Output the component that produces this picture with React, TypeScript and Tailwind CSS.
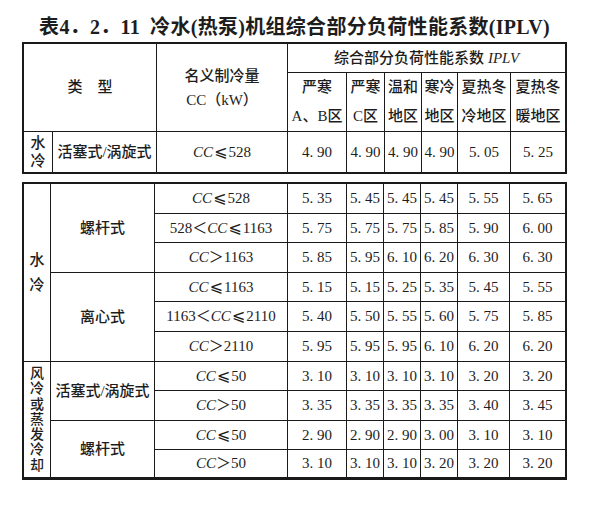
const ink = "text-[#1d1d1d]";

const cell = `bg-white flex items-center justify-center text-center ${ink}`;

function Val({ v }: { v: string }) {
  return <div className={`${cell} text-[15px]`}>{v.replace(".", ". ")}</div>;
}

function Le() {
  return <span className="font-['DejaVu_Serif','DejaVu_Sans',serif] text-[16px] leading-none font-normal mx-[1px]">⩽</span>;
}

function Cap({ c }: { c: string }) {
  // "le:528", "mid:528:1163", "gt:1163" style ranges
  const [kind, a, b] = c.split(":");
  const cc = <i>CC</i>;
  if (kind === "le") return <span>{cc}<Le />{a}</span>;
  if (kind === "gt") return <span>{cc}＞{a}</span>;
  return <span>{a}＜{cc}<Le />{b}</span>;
}

function Vertical({ text, lead }: { text: string; lead: string }) {
  return (
    <div className={`${cell} flex-col font-medium ${lead}`}>
      {text.split("").map((ch, i) => (
        <span key={i}>{ch}</span>
      ))}
    </div>
  );
}

type Row = { cc: string; vals: string[] };

const screw: Row[] = [
  { cc: "le:528", vals: ["5.35", "5.45", "5.45", "5.45", "5.55", "5.65"] },
  { cc: "mid:528:1163", vals: ["5.75", "5.75", "5.75", "5.85", "5.90", "6.00"] },
  { cc: "gt:1163", vals: ["5.85", "5.95", "6.10", "6.20", "6.30", "6.30"] },
];
const centrifugal: Row[] = [
  { cc: "le:1163", vals: ["5.15", "5.15", "5.25", "5.35", "5.45", "5.55"] },
  { cc: "mid:1163:2110", vals: ["5.40", "5.50", "5.55", "5.60", "5.75", "5.85"] },
  { cc: "gt:2110", vals: ["5.95", "5.95", "5.95", "6.10", "6.20", "6.20"] },
];
const airScroll: Row[] = [
  { cc: "le:50", vals: ["3.10", "3.10", "3.10", "3.10", "3.20", "3.20"] },
  { cc: "gt:50", vals: ["3.35", "3.35", "3.35", "3.35", "3.40", "3.45"] },
];
const airScrew: Row[] = [
  { cc: "le:50", vals: ["2.90", "2.90", "2.90", "3.00", "3.10", "3.10"] },
  { cc: "gt:50", vals: ["3.10", "3.10", "3.10", "3.20", "3.20", "3.20"] },
];

function Rows({ rows }: { rows: Row[] }) {
  return (
    <>
      {rows.map((r, i) => [
        <div key={`c${i}`} className={`${cell} text-[15px]`}>
          <Cap c={r.cc} />
        </div>,
        ...r.vals.map((v, j) => <Val key={`v${i}-${j}`} v={v} />),
      ])}
    </>
  );
}

const zones = [
  ["严寒", "A、B区"],
  ["严寒", "C区"],
  ["温和", "地区"],
  ["寒冷", "地区"],
  ["夏热冬", "冷地区"],
  ["夏热冬", "暖地区"],
];

export default function App() {
  return (
    <div className="w-[598px] h-[507px] bg-white pl-[22px] pt-[16px] font-['Liberation_Serif','Noto_Sans_CJK_SC',serif]">
      <div className={`w-[545px] text-center text-[20px] leading-[22px] tracking-[0.3px] font-bold mb-[4px] ${ink}`}>
        表4．2．11<span className="inline-block w-[10px]" />冷水(热泵)机组综合部分负荷性能系数(IPLV)
      </div>

      {/* header table */}
      <div className="w-[545px] grid grid-cols-[28px_103px_130px_58px_37px_36px_35px_52px_54px] grid-rows-[28px_58px_40px] gap-px bg-[#1a1a1a] border-2 border-[#1a1a1a]">
        <div className={`${cell} col-span-2 row-span-2 text-[15px] font-medium`}>类　型</div>
        <div className={`${cell} row-span-2 flex-col text-[15px] font-medium leading-[24px]`}>
          <span>名义制冷量</span>
          <span>CC（kW）</span>
        </div>
        <div className={`${cell} col-span-6 text-[15px] font-medium`}>
          综合部分负荷性能系数 <i className="ml-[4px] font-normal">IPLV</i>
        </div>
        {zones.map(([a, b], i) => (
          <div key={i} className={`${cell} flex-col text-[15px] font-medium leading-[29px]`}>
            <span>{a}</span>
            <span>{b}</span>
          </div>
        ))}
        <Vertical text="水冷" lead="text-[15px] leading-[18px]" />
        <div className={`${cell} text-[15px] font-medium`}>活塞式/涡旋式</div>
        <div className={`${cell} text-[15px]`}>
          <Cap c="le:528" />
        </div>
        {["4.90", "4.90", "4.90", "4.90", "5.05", "5.25"].map((v, i) => (
          <Val key={i} v={v} />
        ))}
      </div>

      {/* main table */}
      <div className="mt-[8px] w-[545px] grid grid-cols-[26px_103px_132px_58px_36px_36px_36px_51px_55px] grid-rows-[29px_28px_29px_28px_29px_29px_28px_29px_28px_27px] gap-px bg-[#1a1a1a] border-2 border-b-[3px] border-[#1a1a1a]">
        <div className="row-span-6 grid">
          <Vertical text="水冷" lead="text-[15px] leading-[25px]" />
        </div>
        <div className={`${cell} row-span-3 text-[15px] font-medium`}>螺杆式</div>
        <Rows rows={screw} />
        <div className={`${cell} row-span-3 text-[15px] font-medium`}>离心式</div>
        <Rows rows={centrifugal} />
        <div className="row-span-4 grid">
          <Vertical text="风冷或蒸发冷却" lead="text-[14px] leading-[15.3px]" />
        </div>
        <div className={`${cell} row-span-2 text-[15px] font-medium`}>活塞式/涡旋式</div>
        <Rows rows={airScroll} />
        <div className={`${cell} row-span-2 text-[15px] font-medium`}>螺杆式</div>
        <Rows rows={airScrew} />
      </div>
    </div>
  );
}
